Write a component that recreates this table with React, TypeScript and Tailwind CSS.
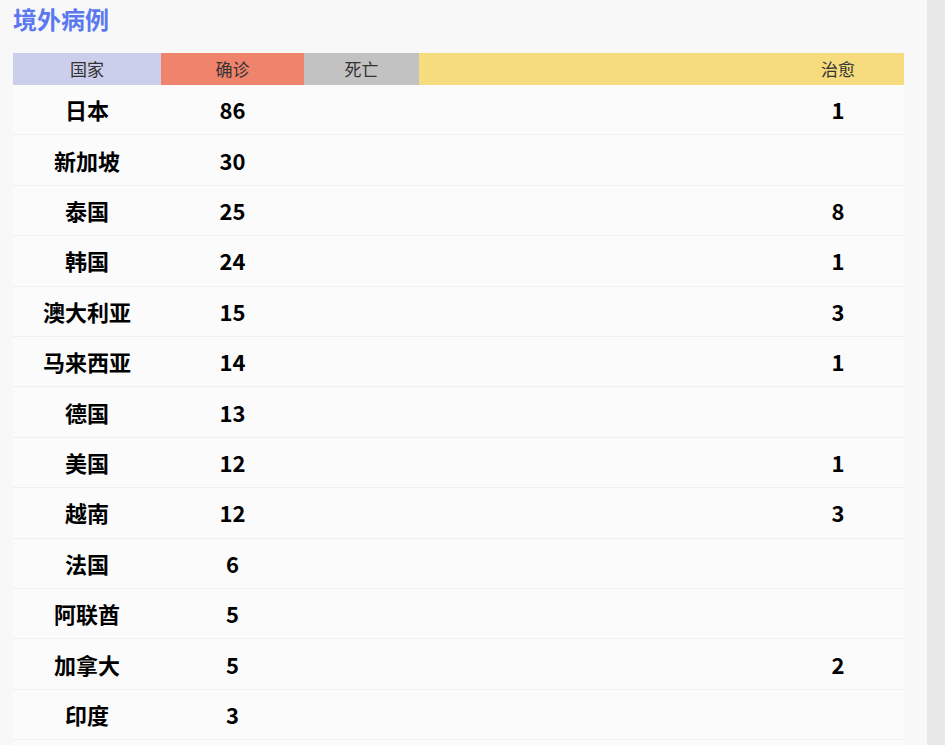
const rows: [string, number, string, string][] = [
  ['日本', 86, '', '1'],
  ['新加坡', 30, '', ''],
  ['泰国', 25, '', '8'],
  ['韩国', 24, '', '1'],
  ['澳大利亚', 15, '', '3'],
  ['马来西亚', 14, '', '1'],
  ['德国', 13, '', ''],
  ['美国', 12, '', '1'],
  ['越南', 12, '', '3'],
  ['法国', 6, '', ''],
  ['阿联酋', 5, '', ''],
  ['加拿大', 5, '', '2'],
  ['印度', 3, '', ''],
];

export default function App() {
  return (
    <div
      className="flex h-[745px] w-full overflow-hidden bg-[#f8f8f8]"
      style={{ fontFamily: '"Noto Sans CJK SC", "Liberation Sans", sans-serif' }}
    >
      <div className="flex-1 min-w-0">
        <h1 className="pl-[13px] pt-[3px] h-[53px] text-[24px] font-bold leading-[32px] text-[#5b78f0]">
          境外病例
        </h1>
        <div className="ml-[13px] w-[891px]">
          {/* header */}
          <div className="flex h-[32px] text-[17px] leading-[32px] text-[#333]">
            <div className="w-[148px] bg-[#cccfeb] text-center">国家</div>
            <div className="w-[143px] bg-[#f0836c] text-center">确诊</div>
            <div className="w-[115px] bg-[#c2c2c2] text-center">死亡</div>
            <div className="w-[353px] bg-[#f6dc7e]"></div>
            <div className="w-[132px] bg-[#f6dc7e] text-center">治愈</div>
          </div>
          {/* body */}
          {rows.map(([name, confirmed, dead, cured]) => (
            <div
              key={name}
              className="flex h-[50.42px] items-center border-b border-[#f0f0f0] bg-[#fbfbfb] text-[22px] font-bold text-black"
            >
              <div className="w-[148px] text-center">{name}</div>
              <div className="w-[143px] text-center">{confirmed}</div>
              <div className="w-[115px] text-center">{dead}</div>
              <div className="w-[353px]"></div>
              <div className="w-[132px] text-center">{cured}</div>
            </div>
          ))}
          <div className="h-[20px] bg-[#fbfbfb]" />
        </div>
      </div>
      <div className="w-[18px] shrink-0 bg-[#e8e8e8]" />
    </div>
  );
}
